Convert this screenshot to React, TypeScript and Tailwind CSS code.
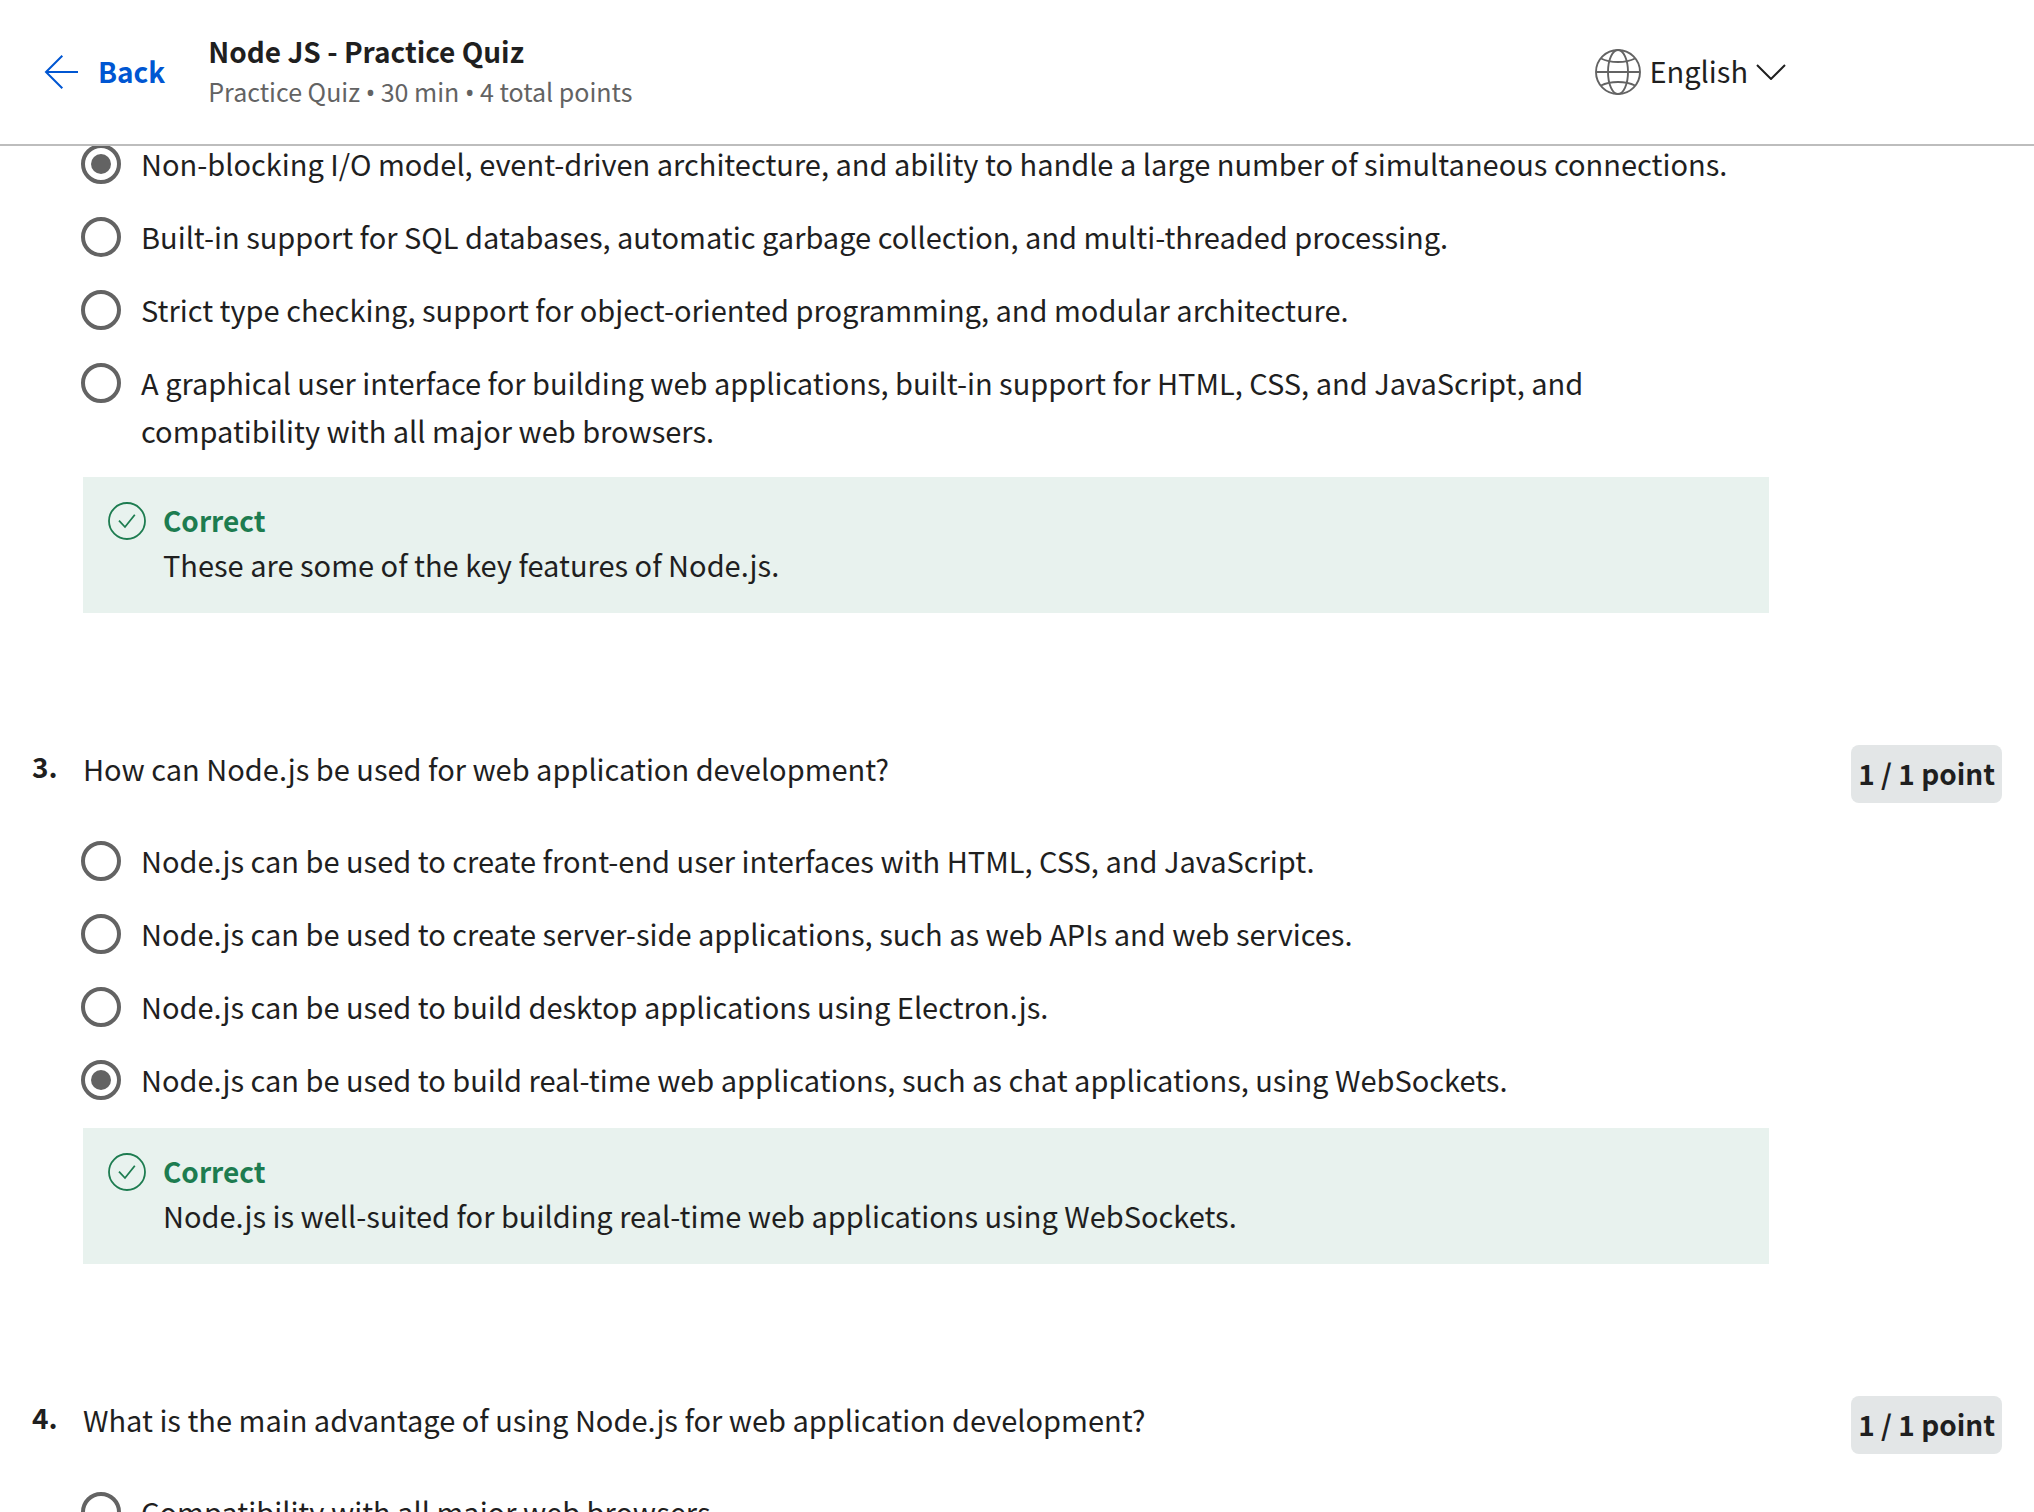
import { useId, useState } from "react";

type QuestionData = {
  number?: string;
  prompt?: string;
  points?: string;
  options: string[];
  selected?: number;
  feedback?: string;
};

const questions: QuestionData[] = [
  {
    options: [
      "Non-blocking I/O model, event-driven architecture, and ability to handle a large number of simultaneous connections.",
      "Built-in support for SQL databases, automatic garbage collection, and multi-threaded processing.",
      "Strict type checking, support for object-oriented programming, and modular architecture.",
      "A graphical user interface for building web applications, built-in support for HTML, CSS, and JavaScript, and compatibility with all major web browsers.",
    ],
    selected: 0,
    feedback: "These are some of the key features of Node.js.",
  },
  {
    number: "3.",
    prompt: "How can Node.js be used for web application development?",
    points: "1 / 1 point",
    options: [
      "Node.js can be used to create front-end user interfaces with HTML, CSS, and JavaScript.",
      "Node.js can be used to create server-side applications, such as web APIs and web services.",
      "Node.js can be used to build desktop applications using Electron.js.",
      "Node.js can be used to build real-time web applications, such as chat applications, using WebSockets.",
    ],
    selected: 3,
    feedback: "Node.js is well-suited for building real-time web applications using WebSockets.",
  },
  {
    number: "4.",
    prompt: "What is the main advantage of using Node.js for web application development?",
    points: "1 / 1 point",
    options: ["Compatibility with all major web browsers."],
  },
];

function BackArrow() {
  return (
    <svg className="h-9 w-9" viewBox="0 0 36 36" fill="none" stroke="currentColor" strokeWidth="2" aria-hidden="true">
      <path d="M18.300 1.700 2 18l16.300 16.300M2 18h32" />
    </svg>
  );
}

function Globe() {
  return (
    <svg className="h-[46px] w-[46px] text-[#636363]" viewBox="0 0 46 46" fill="none" stroke="currentColor" strokeWidth="1.900" aria-hidden="true">
      <circle cx="23" cy="23" r="22" />
      <path d="M1 23h44" />
      <path d="M23 1c-5.500 0-10 9.800-10 22s4.500 22 10 22 10-9.800 10-22S28.500 1 23 1Z" />
      <path d="M6 9.500c4.500 2.300 10.500 3.500 17 3.500s12.500-1.200 17-3.500M6 36.500c4.500-2.300 10.500-3.500 17-3.500s12.500 1.200 17 3.500" />
    </svg>
  );
}

function ChevronDown() {
  return (
    <svg className="h-4 w-[30px]" viewBox="0 0 30 16" fill="none" stroke="currentColor" strokeWidth="2" aria-hidden="true">
      <path d="m1 1 14 14L29 1" />
    </svg>
  );
}

function CheckCircle() {
  return (
    <svg className="h-[38px] w-[38px]" viewBox="0 0 38 38" fill="none" stroke="currentColor" strokeWidth="1.800" aria-hidden="true">
      <circle cx="19" cy="19" r="18" />
      <path d="m11 18.700 6 6.300 9.800-12.300" />
    </svg>
  );
}

function Bullet() {
  return <span className="font-['Noto_Sans',sans-serif]">•</span>;
}

function Header() {
  return (
    <header className="z-10 flex h-[146px] shrink-0 items-center border-b-2 border-[#bdbdbd] bg-white pl-11">
      <a href="#" className="flex items-center gap-[18px] text-[28px] leading-[44px] font-bold text-[#0056d2]">
        <BackArrow />
        <span className="pb-0.5">Back</span>
      </a>
      <div className="ml-[43px] pb-0.5">
        <h1 className="text-[28px] leading-10 font-bold">Node JS - Practice Quiz</h1>
        <p className="text-[25px] leading-10 text-[#636363]">
          Practice Quiz <Bullet /> 30 min <Bullet /> 4 total points
        </p>
      </div>
      <button type="button" className="mr-[248px] ml-auto flex items-center gap-2 text-[29px] leading-[44px]">
        <Globe />
        <span className="pb-1">English</span>
        <ChevronDown />
      </button>
    </header>
  );
}

function Feedback({ text }: { text: string }) {
  return (
    <div className="mt-[23px] flex gap-[17px] bg-[#e8f2ee] px-[25px] pt-[21px] pb-[27px]">
      <div className="shrink-0 pt-1 text-[#1d7c50]">
        <CheckCircle />
      </div>
      <div className="leading-[44px]">
        <p className="text-[28px] font-bold text-[#1d7c50]">Correct</p>
        <p className="text-[29px]">{text}</p>
      </div>
    </div>
  );
}

function Question({ data }: { data: QuestionData }) {
  const name = useId();
  const [selected, setSelected] = useState(data.selected);
  return (
    <section className="mb-[132px] grid grid-cols-[51px_1fr_233px] px-8">
      {data.prompt && (
        <>
          <span className="text-[28px] leading-[42px] font-bold">{data.number}</span>
          <h2 className="mb-[45px] text-[29px] leading-[46px]">{data.prompt}</h2>
          <span className="h-[58px] justify-self-end rounded-lg bg-[#e3e6e7] px-[7px] text-[28px] leading-[56px] font-bold whitespace-nowrap">
            {data.points}
          </span>
        </>
      )}
      <div className="col-start-2">
        <div role="radiogroup" aria-label={data.prompt ?? "Key features of Node.js"} className="flex flex-col gap-[23px]">
          {data.options.map((option, i) => (
            <label key={option} className="-ml-0.5 flex items-start gap-5 pr-7 text-[29px] leading-[48px]">
              <span className="flex h-[50px] items-center">
                <input
                  type="radio"
                  name={name}
                  checked={selected === i}
                  onChange={() => setSelected(i)}
                  className="grid h-10 w-10 appearance-none place-items-center rounded-full border-4 border-[#636363] bg-white before:h-5 before:w-5 before:rounded-full checked:before:bg-[#636363]"
                />
              </span>
              <span>{option}</span>
            </label>
          ))}
        </div>
        {data.feedback && <Feedback text={data.feedback} />}
      </div>
    </section>
  );
}

export default function App() {
  return (
    <div className="flex h-screen flex-col overflow-hidden bg-white font-['Noto_Sans_CJK_SC',sans-serif] text-[#1f1f1f]">
      <Header />
      <main className="-mt-[7px] min-h-0 flex-1 overflow-hidden">
        {questions.map((q, i) => (
          <Question key={i} data={q} />
        ))}
      </main>
    </div>
  );
}
